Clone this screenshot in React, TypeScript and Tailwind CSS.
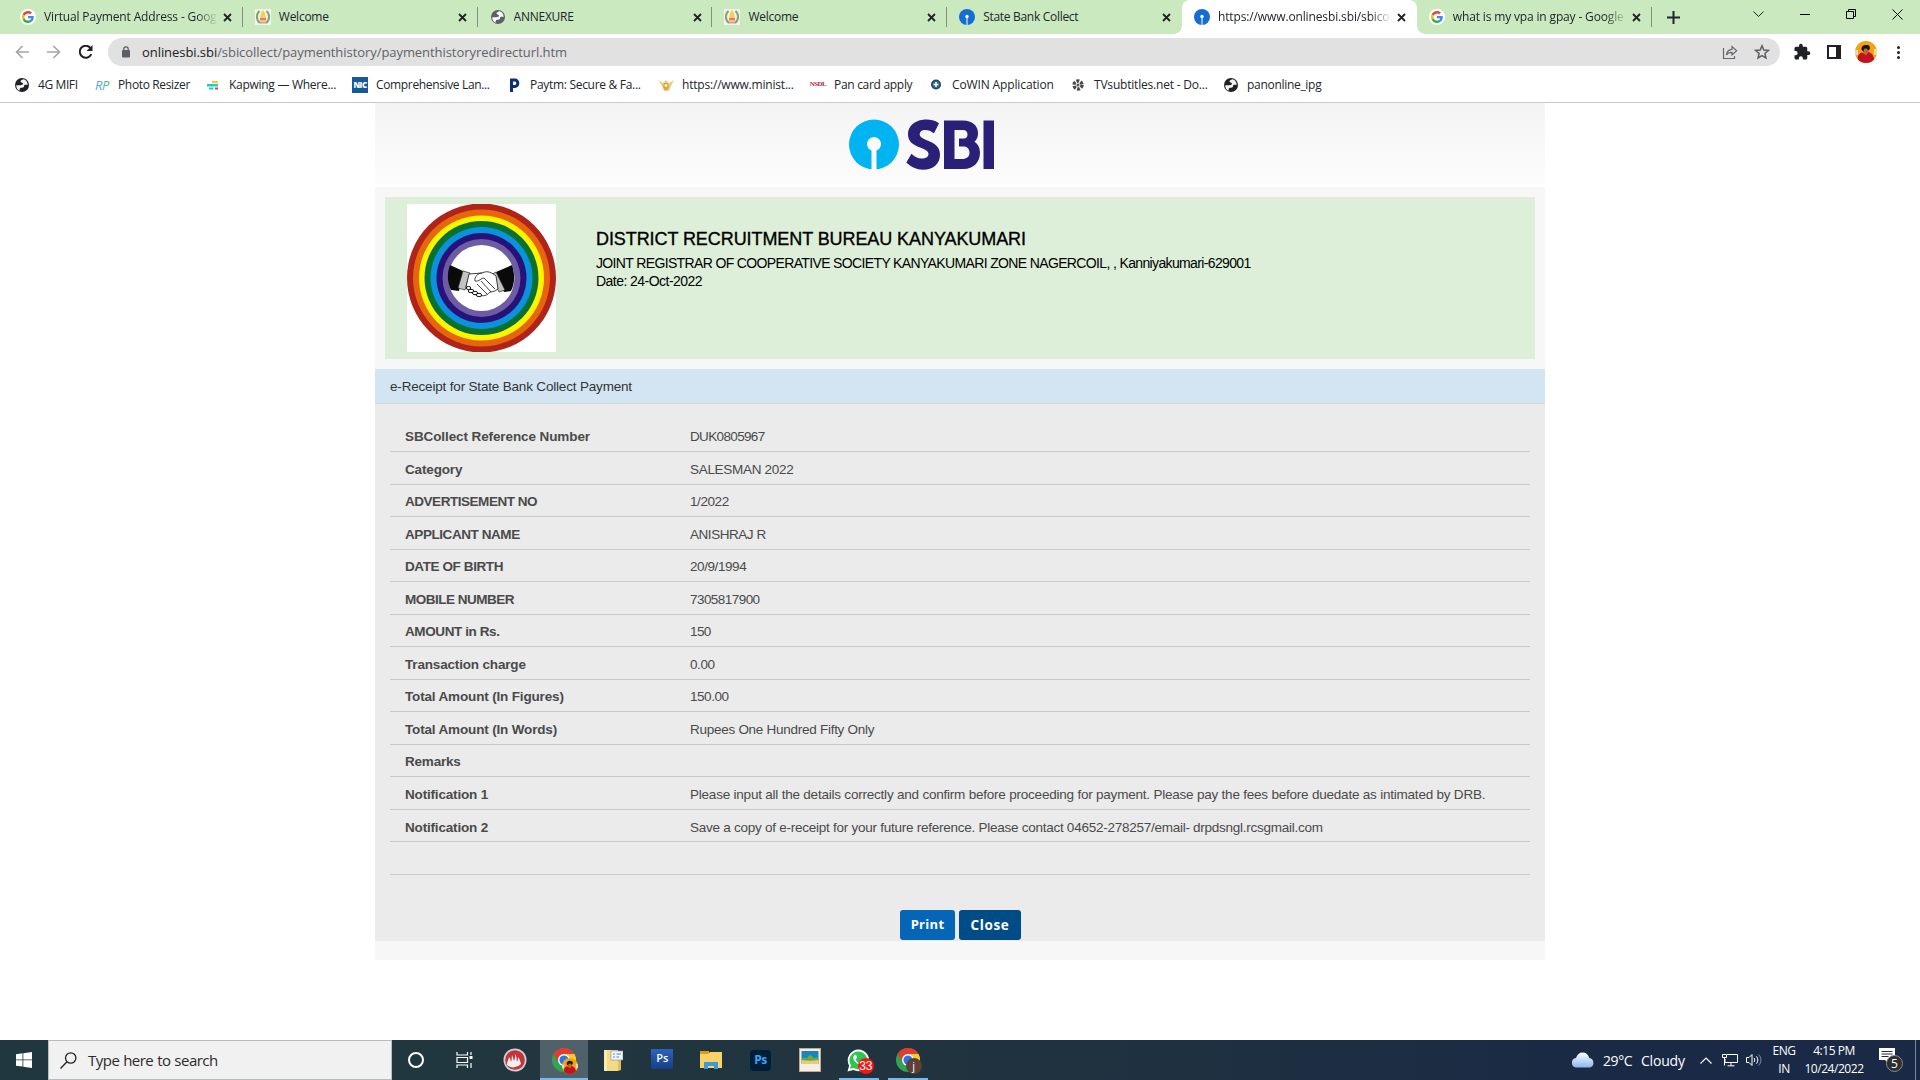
import React from "react";

const ui = "font-['Open_Sans',sans-serif]";

/* ---------- small icons ---------- */
const Google = () => (
  <svg viewBox="0 0 16 16" className="size-4">
    <circle cx="8" cy="8" r="8" fill="#fff" />
    <g transform="translate(2 2) scale(.25)">
      <path fill="#EA4335" d="M24 9.5c3.54 0 6.71 1.22 9.21 3.6l6.85-6.85C35.9 2.38 30.47 0 24 0 14.62 0 6.51 5.38 2.56 13.22l7.98 6.19C12.43 13.72 17.74 9.5 24 9.5z" />
      <path fill="#4285F4" d="M46.98 24.55c0-1.57-.15-3.09-.38-4.55H24v9.02h12.94c-.58 2.96-2.26 5.48-4.78 7.18l7.73 6c4.51-4.18 7.09-10.36 7.09-17.65z" />
      <path fill="#FBBC05" d="M10.53 28.59c-.48-1.45-.76-2.99-.76-4.59s.27-3.14.76-4.59l-7.98-6.19C.92 16.46 0 20.12 0 24c0 3.88.92 7.54 2.56 10.78l7.97-6.19z" />
      <path fill="#34A853" d="M24 48c6.48 0 11.93-2.13 15.89-5.81l-7.73-6c-2.15 1.45-4.92 2.3-8.16 2.3-6.26 0-11.57-4.22-13.47-9.91l-7.98 6.19C6.51 42.62 14.62 48 24 48z" />
    </g>
  </svg>
);
const Emblem = () => (
  <svg viewBox="0 0 16 16" className="size-4">
    <rect width="16" height="16" fill="#f4f3ea" />
    <path d="M4.500 2C1 5 1 11 5 14M11.500 2c3.500 3 3.500 9-.5 12" fill="none" stroke="#7fa274" strokeWidth="2" />
    <path d="M8 1 6 4 4.800 10h6.400L10 4z" fill="#f5cf5b" />
    <path d="M5 9h6v2.500H5z" fill="#f0785e" />
    <path d="M5 12.500h6v2H5z" fill="#c9a97c" />
  </svg>
);
const Globe = ({ color }: { color: string }) => (
  <svg viewBox="0 0 16 16" className="size-4">
    <circle cx="8" cy="8" r="7" fill={color} />
    <path d="M9.500 2.300C7.500 2.700 6.300 3.600 6.600 4.800c.3 1 2 .7 2.400 1.800.3 1.100-1.300 1.600-2.600 1.600H2.200c0 2.600 1.300 4.700 3.300 5.600.4-1.200 0-2 .9-2.700.9-.6 2.600-.2 3.300-1.100.6-.8 0-1.500.8-2.100.8-.5 2-.1 3.300-.2C13.300 4.300 11.500 2.700 9.500 2.300z" fill="#fff" fillOpacity=".95" />
  </svg>
);
const SbiDot = () => (
  <svg viewBox="0 0 16 16" className="size-4">
    <circle cx="8" cy="8" r="8" fill="#156dd4" />
    <circle cx="8" cy="7.500" r="1.700" fill="#fff" />
    <path d="M7.500 8h1v8h-1z" fill="#fff" />
  </svg>
);
const X = () => (
  <svg viewBox="0 0 9 9" className="size-[9px]">
    <path d="M1 1l7 7M8 1l-7 7" stroke="#222" strokeWidth="1.800" />
  </svg>
);
const Avatar = ({ className }: { className: string }) => (
  <svg viewBox="0 0 22 22" className={className}>
    <clipPath id="av"><circle cx="11" cy="11" r="11" /></clipPath>
    <g clipPath="url(#av)">
      <rect width="22" height="22" fill="#f2a30f" />
      <path d="M0 9h3v5H0zM19 8h3v6h-3z" fill="#e3dcc0" />
      <path d="M3 22c-1-6 0-9.500 4-10.500l3 1.500 3-2c4 .5 6 4 7 11z" fill="#c3121f" />
      <path d="M8.500 6.500h5v4.500l-2.500 3.500-2.500-3z" fill="#b8683e" />
      <path d="M6.500 8.500c-.5-3 2-5 5-4.500 3-.3 4 2 3 4.500l-1.500 1-1-2-3 .3L8.500 11z" fill="#1b1414" />
    </g>
  </svg>
);

/* ---------- tab strip ---------- */
const tabs = [
  { icon: <Google />, title: "Virtual Payment Address - Googl", track: "tracking-[-0.15px]", fade: true },
  { icon: <Emblem />, title: "Welcome", track: "tracking-[-0.25px]" },
  { icon: <Globe color="#5b6066" />, title: "ANNEXURE", track: "tracking-[-0.25px]" },
  { icon: <Emblem />, title: "Welcome", track: "tracking-[-0.25px]" },
  { icon: <SbiDot />, title: "State Bank Collect", track: "tracking-[-0.3px]", noSep: true },
  { icon: <SbiDot />, title: "https://www.onlinesbi.sbi/sbico", track: "tracking-[-0.13px]", active: true, fade: true },
  { icon: <Google />, title: "what is my vpa in gpay - Google", track: "tracking-[-0.15px]", fade: true },
];

const TabStrip = () => (
  <div className="flex h-[34px] bg-[#cae9be] pl-2">
    {tabs.map((t, i) => (
      <div
        key={i}
        className={
          "relative flex h-[34px] w-[234.8px] shrink-0 items-center pl-3 " + (t.active ? "rounded-t-lg bg-white" : "")
        }
      >
        {t.icon}
        <div
          className={
            "ml-2 w-[173px] overflow-hidden text-[12px] leading-4 whitespace-nowrap text-[#20262b] " + t.track +
            (t.fade ? " [mask-image:linear-gradient(to_right,#000_152px,transparent_174px)]" : "")
          }
        >
          {t.title}
        </div>
        <div className="ml-[6px]"><X /></div>
        {t.active && (
          <>
            <div className="absolute bottom-0 -left-2 size-2 bg-[radial-gradient(circle_at_0_0,transparent_7.5px,white_8px)]" />
            <div className="absolute -right-2 bottom-0 size-2 bg-[radial-gradient(circle_at_100%_0,transparent_7.5px,white_8px)]" />
          </>
        )}
        {!t.active && !t.noSep && <div className="absolute top-[7px] right-0 h-5 w-px bg-[#7d9176]" />}
      </div>
    ))}
    <svg viewBox="0 0 13 13" className="mt-[11px] ml-[15px] size-[13px]">
      <path d="M6.500 0v13M0 6.500h13" stroke="#20262b" strokeWidth="2" />
    </svg>
    <div className="mr-[17px] ml-auto flex items-start gap-[36px] pt-[9px]">
      <svg viewBox="0 0 11 11" className="size-[11px]"><path d="M.5 2.500l5 5 5-5" fill="none" stroke="#222" /></svg>
      <svg viewBox="0 0 10 11" className="h-[11px] w-[10px]"><path d="M0 5.500h10" stroke="#000" /></svg>
      <svg viewBox="0 0 10 10" className="size-[10px]"><path d="M.5 2.500h7v7h-7zM2.500 2.500v-2h7v7h-2" fill="none" stroke="#000" /></svg>
      <svg viewBox="0 0 11 11" className="size-[11px]"><path d="M.5.5l10 10M10.500.5l-10 10" stroke="#000" /></svg>
    </div>
  </div>
);

/* ---------- toolbar ---------- */
const Toolbar = () => (
  <div className="flex h-[36px] items-center bg-white">
    <svg viewBox="0 0 14 14" className="ml-[15px] size-[14px]"><path d="M14 7H1.500M7.500 1l-6 6 6 6" fill="none" stroke="#a3a5a8" strokeWidth="1.600" /></svg>
    <svg viewBox="0 0 14 14" className="ml-[18px] size-[14px]"><path d="M0 7h12.500M6.500 1l6 6-6 6" fill="none" stroke="#a3a5a8" strokeWidth="1.600" /></svg>
    <svg viewBox="0 0 14 14" className="ml-[18px] size-[14px]">
      <path d="M12.300 9.200A6 6 0 1 1 11.200 2.700" fill="none" stroke="#202124" strokeWidth="2" />
      <path d="M13.500 0v6h-6z" fill="#202124" />
    </svg>
    <div className="ml-[15px] flex h-7 w-[1672px] items-center rounded-full bg-[#e1e1e1] pl-[14px]">
      <svg viewBox="0 0 8 12" className="h-[12px] w-[8px]">
        <rect y="4" width="8" height="7.500" rx="1" fill="#5b5f64" />
        <path d="M1.800 5V3a2.200 2.200 0 0 1 4.400 0v2" fill="none" stroke="#5b5f64" strokeWidth="1.300" />
      </svg>
      <div className="ml-[12px] text-[13px] leading-4 tracking-[-0.06px] whitespace-nowrap text-[#5f6368]">
        <span className="text-[#202124]">onlinesbi.sbi</span>/sbicollect/paymenthistory/paymenthistoryredirecturl.htm
      </div>
      <div className="mr-[10px] ml-auto flex items-center gap-4">
        <svg viewBox="0 0 16 16" className="size-4">
          <path d="M1.500 4v10.500h11V12" fill="none" stroke="#666a6e" strokeWidth="1.200" />
          <path d="M4.500 11c.3-4 2.500-5.500 5.500-5.700V2.500l4.700 4.300L10 11V8.300C7.500 8.200 5.500 9 4.500 11z" fill="none" stroke="#666a6e" strokeWidth="1.200" />
        </svg>
        <svg viewBox="0 0 16 16" className="size-4">
          <path d="M8 1.800l1.800 4.200 4.600.4-3.500 3 1.100 4.500L8 11.500l-4 2.400 1.100-4.500-3.500-3 4.600-.4z" fill="none" stroke="#5b5f64" strokeWidth="1.500" />
        </svg>
      </div>
    </div>
    <svg viewBox="0 0 24 24" className="ml-[13px] size-[18px]">
      <path fill="#202124" d="M20.500 11H19V7c0-1.100-.9-2-2-2h-4V3.500a2.500 2.500 0 0 0-5 0V5H4a2 2 0 0 0-2 2v3.800h1.500a2.700 2.700 0 0 1 0 5.400H2V20c0 1.100.9 2 2 2h3.800v-1.500a2.700 2.700 0 0 1 5.400 0V22H17a2 2 0 0 0 2-2v-4h1.500a2.500 2.500 0 0 0 0-5z" />
    </svg>
    <div className="ml-[16px] h-[14px] w-[14px] border-2 border-r-[5px] border-[#202124] bg-white" />
    <Avatar className="ml-[14px] size-[22px]" />
    <div className="ml-[20px] flex flex-col gap-[2px]">
      <i className="size-[3px] rounded-full bg-[#202124]" />
      <i className="size-[3px] rounded-full bg-[#202124]" />
      <i className="size-[3px] rounded-full bg-[#202124]" />
    </div>
  </div>
);

/* ---------- bookmarks ---------- */
const marks = [
  { w: "w-[80px]", t: "tracking-[-0.4px]", label: "4G MIFI", icon: <Globe color="#202124" /> },
  { w: "w-[111px]", t: "tracking-[-0.35px]", label: "Photo Resizer", icon: <span className="text-[13px] leading-4 tracking-[-0.5px] text-[#55a7dc] italic">R<span className="text-[#4fc183]">P</span></span> },
  {
    w: "w-[147px]", t: "tracking-[-0.28px]", label: "Kapwing — Where...", icon: (
      <svg viewBox="0 0 16 16" className="size-4"><path d="M7 4h6v2H7z" fill="#ffc629" /><path d="M2 7h11v2.500H2z" fill="#18d1c4" /><path d="M4 10.500h4.500v2H4z" fill="#18d1c4" /><path d="M10 10.500h3v2h-3z" fill="#f0336c" /></svg>
    ),
  },
  { w: "w-[154px]", t: "tracking-[-0.35px]", label: "Comprehensive Lan...", icon: <span className="flex size-4 items-center justify-center bg-[#155a97] text-[8px] leading-none font-extrabold tracking-[-0.5px] text-white">NIC</span> },
  { w: "w-[152px]", t: "tracking-[-0.3px]", label: "Paytm: Secure & Fa...", icon: <svg viewBox="0 0 16 16" className="size-4"><path d="M5.500 15V3H9a2.600 3 0 0 1 0 6.500H7" fill="none" stroke="#0b2e74" strokeWidth="3" /></svg> },
  { w: "w-[152px]", t: "tracking-[-0.2px]", label: "https://www.minist...", icon: <svg viewBox="0 0 16 16" className="size-4"><path d="M0 3l5 3 3-3 3 3 5-3-3 6-2 5H6L4 9z" fill="#e9cf8b" /><path d="M6 6h4l1 4-2 3H7L5 10z" fill="#d6a63c" /><circle cx="8" cy="8.500" r="1.500" fill="#fff3d0" /></svg> },
  { w: "w-[118px]", t: "tracking-[-0.3px]", label: "Pan card apply", icon: <span className="font-['Liberation_Serif',serif] text-[7px] leading-none font-bold tracking-[-0.6px] text-[#b52a33]">NSDL</span> },
  { w: "w-[142px]", t: "tracking-[-0.13px]", label: "CoWIN Application", icon: <svg viewBox="0 0 16 16" className="size-4"><circle cx="8" cy="7.500" r="5" fill="#1d4266" /><circle cx="8" cy="7.500" r="3.700" fill="#2f6a8c" /><path d="M8 5v5M5.500 7.500h5" stroke="#fff" strokeWidth="1.500" /></svg> },
  { w: "w-[153px]", t: "tracking-[-0.2px]", label: "TVsubtitles.net - Do...", icon: <svg viewBox="0 0 16 16" className="size-4"><circle cx="8" cy="8" r="4" fill="none" stroke="#4a4a4a" strokeWidth="3.400" strokeDasharray="2.900 1.290" /><circle cx="8" cy="8" r="1.500" fill="#555" /></svg> },
  { w: "w-[120px]", t: "tracking-[-0.3px]", label: "panonline_ipg", icon: <Globe color="#202124" /> },
];

const Bookmarks = () => (
  <div className="flex h-[33px] items-center border-b border-[#c9c9c9] bg-white pb-[3px] pl-[14px]">
    {marks.map((m) => (
      <div key={m.label} className={"flex shrink-0 items-center " + m.w}>
        <div className="flex size-4 items-center justify-center">{m.icon}</div>
        <div className={"ml-2 text-[12px] leading-4 whitespace-nowrap text-[#20262b] " + m.t}>{m.label}</div>
      </div>
    ))}
  </div>
);

/* ---------- page ---------- */
const SbiLogo = () => (
  <svg viewBox="0 0 146 51" className="h-[51px] w-[146px]">
    <circle cx="25" cy="25.500" r="25" fill="#00b4f1" />
    <path d="M22.500 51V31.500A7 7 0 1 1 27.500 31.500V51z" fill="#fbfbfb" />
    <path d="M90 4.200C84 .2 78 .3 74 .8c-9 1-15 7-15 14.200 0 8 5 10.500 12 13.500 5.500 2.300 8.500 3.500 8.500 6.500 0 3-3 4.500-6.500 4.500-4.500 0-7.500-2-10.500-4.800L57.300 43.500C62 48 67.500 50.700 74 50.700c10 0 17-6 17-15 0-8.500-6-11.500-12-14-5-2.200-8.300-3.500-8.300-6.500 0-2.700 2.500-4.200 5.300-4.200 3.500 0 6 1.200 9 3.300z" fill="#2a2078" />
    <path fillRule="evenodd" d="M95 1.500h19c9 0 15 5 15 12.500 0 4-1 6.500-3.500 8.700 3.500 2.500 5.500 6 5.500 11.300 0 9-6.500 16-16.500 16H95zM105.500 11v29H113c5 0 7.500-2.500 7.500-6.300 0-3.700-2.500-6.200-5.500-6.200h-5v-8h5c2 0 3.500-1.500 3.500-4s-1.500-4.500-4.500-4.500z" fill="#2a2078" />
    <path d="M134.500 1.500h10.500V50h-10.500z" fill="#2a2078" />
  </svg>
);

const rings = [
  { r: 74.5, c: "#b02318" }, { r: 68.5, c: "#e8650f" }, { r: 62.5, c: "#fdf500" }, { r: 57, c: "#08712f" },
  { r: 51, c: "#0b92dd" }, { r: 45, c: "#27127a" }, { r: 39, c: "#6d5ba5" }, { r: 33, c: "#fff" },
];
const Handshake = () => (
  <svg viewBox="0 0 149 148" className="h-[148px] w-[149px] bg-white">
    {rings.map((k) => <circle key={k.c} cx="74.500" cy="74" r={k.r} fill={k.c} />)}
    <path d="M43 61l13 6-4 20-8-1c-4-8-4-17-1-25zM105 61l-16 7 8 20 7-1c4-8 4-17 1-26z" fill="#0a0a0a" />
    <path d="M56 67l7 2-5 17-7-2zM89 68l-5 3 8 17 6-2z" fill="#c3c3c3" stroke="#222" strokeWidth=".7" />
    <path d="M62 70l13-1c6-3 10 0 14 3l2 13c-3 2-5 3-8 3-4 5-9 4-14 3-5-2-8-6-10-8z" fill="#fff" stroke="#111" strokeWidth=".8" />
    <path d="M75 69c-4 0-8 4-7 8 4 1 6-3 9-3l11 11M74 77l10 11M70 80l10 10" fill="none" stroke="#111" strokeWidth=".8" />
    <g fill="#fff" stroke="#111" strokeWidth="1">
      <ellipse cx="61.500" cy="84" rx="2.200" ry="1.600" /><ellipse cx="64" cy="87" rx="2.800" ry="1.700" />
      <ellipse cx="68" cy="89" rx="2.600" ry="1.700" /><ellipse cx="72" cy="91" rx="2.600" ry="1.700" />
    </g>
  </svg>
);

const rows = [
  ["SBCollect Reference Number", "DUK0805967", "tracking-[-0.1px]", "tracking-[-0.65px]"],
  ["Category", "SALESMAN 2022", "tracking-[-0.15px]", "tracking-[-0.3px]"],
  ["ADVERTISEMENT NO", "1/2022", "tracking-[-0.46px]", "tracking-[-0.42px]"],
  ["APPLICANT NAME", "ANISHRAJ R", "tracking-[-0.43px]", "tracking-[-0.45px]"],
  ["DATE OF BIRTH", "20/9/1994", "tracking-[-0.4px]", "tracking-[-0.42px]"],
  ["MOBILE NUMBER", "7305817900", "tracking-[-0.5px]", "tracking-[-0.55px]"],
  ["AMOUNT in Rs.", "150", "tracking-[-0.4px]", "tracking-[-0.6px]"],
  ["Transaction charge", "0.00", "tracking-[-0.17px]", "tracking-[-0.4px]"],
  ["Total Amount (In Figures)", "150.00", "tracking-[-0.16px]", "tracking-[-0.45px]"],
  ["Total Amount (In Words)", "Rupees One Hundred Fifty Only", "tracking-[-0.16px]", "tracking-[-0.27px]"],
  ["Remarks", "", "tracking-[-0.2px]", ""],
  ["Notification 1", "Please input all the details correctly and confirm before proceeding for payment. Please pay the fees before duedate as intimated by DRB.", "tracking-[-0.18px]", "tracking-[-0.215px]"],
  ["Notification 2", "Save a copy of e-receipt for your future reference. Please contact 04652-278257/email- drpdsngl.rcsgmail.com", "tracking-[-0.18px]", "tracking-[-0.255px]"],
  ["", "", "", ""],
];

const Receipt = () => (
  <div className="mx-auto w-[1170px] bg-[#f7f7f7] font-['Liberation_Sans',Arial,sans-serif]">
    <div className="h-[84px] border-b-[3px] border-white bg-linear-to-b from-[#f4f4f4] to-[#fcfcfc] pt-[16px] pl-[474px]">
      <SbiLogo />
    </div>
    <div className="mx-[10px] mt-[10px] flex h-[162px] bg-[#ddefd8] pt-[7px] pl-[22px] text-black">
      <Handshake />
      <div className="ml-[40px] pt-[24px] whitespace-nowrap">
        <div className="text-[18px] leading-[22px] tracking-[-0.08px] [-webkit-text-stroke:0.35px_black]">DISTRICT RECRUITMENT BUREAU KANYAKUMARI</div>
        <div className="mt-[4px] text-[14px] leading-[18px] tracking-[-0.64px]">JOINT REGISTRAR OF COOPERATIVE SOCIETY KANYAKUMARI ZONE NAGERCOIL, , Kanniyakumari-629001</div>
        <div className="text-[14px] leading-[18px] tracking-[-0.54px]">Date: 24-Oct-2022</div>
      </div>
    </div>
    <div className="mt-[10px] h-[35px] border-b border-[#d3dbe1] bg-[#d3e5f3] pl-[15px] text-[13.5px] leading-[35px] text-[#333]">
      <span className="tracking-[-0.18px]">e-Receipt for State Bank Collect Payment</span>
    </div>
    <div className="h-[537px] bg-[#ebebeb] px-[15px] pt-[15.5px]">
      {rows.map((r, i) => (
        <div key={i} className="flex h-[32.54px] items-center border-b border-[#cacaca] pl-[15px] text-[13.5px] text-[#4a4a4a]">
          <div className={"w-[285px] shrink-0 pt-[4px] font-bold whitespace-nowrap " + r[2]}>{r[0]}</div>
          <div className={"pt-[4px] whitespace-nowrap " + r[3]}>{r[1]}</div>
        </div>
      ))}
      <div className="mt-[35px] ml-[510px] flex gap-1 font-['Open_Sans',sans-serif] text-[13px] font-bold text-white">
        <button className="h-[30px] w-[55px] rounded-[3px] bg-[#0566b8] tracking-[0.3px]">Print</button>
        <button className="h-[30px] w-[62px] rounded-[3px] bg-[#004c86] text-[13.500px] tracking-[0.6px]">Close</button>
      </div>
    </div>
    <div className="h-[19px]" />
  </div>
);

/* ---------- taskbar ---------- */
const Chrome = () => (
  <svg viewBox="0 0 24 24" className="size-6">
    <circle cx="12" cy="12" r="12" fill="#32a350" />
    <path d="M1.600 6A12 12 0 0 1 22.400 6H12a6 6 0 0 0-5.200 9z" fill="#e33b2e" />
    <path d="M22.400 6A12 12 0 0 1 12 24l5.200-9A6 6 0 0 0 12 6z" fill="#fcc934" />
    <circle cx="12" cy="12" r="6" fill="#fff" />
    <circle cx="12" cy="12" r="4.600" fill="#2a76e8" />
  </svg>
);

const apps = [
  {
    icon: (
      <svg viewBox="0 0 24 24" className="size-6">
        <circle cx="12" cy="12" r="11.500" fill="#d0d0d0" /><circle cx="12" cy="12" r="9.800" fill="#c5343b" />
        <path d="M4 17c0-4 1.500-5 2-8 1.500 1.500 1.500 3 2 5 1-2 .5-4 1-7 1 2 1.500 4 2 6 1-2 1-4 1.500-7 1 2.500 1 5 1.500 7.500.7-1 1-2.500 1-4.500 2 2.500 2.500 5 3 7a10 10 0 0 1-14 1z" fill="#f3f0ef" />
      </svg>
    ),
  },
  { icon: <><Chrome /><div className="absolute top-[18px] left-[22px]"><Avatar className="size-4" /></div></>, bg: true, bar: "w-12" },
  {
    icon: (
      <svg viewBox="0 0 20 24" className="h-6 w-5">
        <path d="M1 2h14v21H1z" fill="#f5da86" /><path d="M1 2h3v21H1z" fill="#fbe9ae" /><path d="M15 10h3v12l-3 1z" fill="#e0bd5d" />
        <path d="M8 3h12v9H8z" fill="#f5f8fb" stroke="#8a9ba8" strokeWidth=".7" /><path d="M10 6h2m1.500 0H18M10 9h2m1.500 0H16" stroke="#3c87c8" strokeWidth="1.200" />
      </svg>
    ),
  },
  { icon: <div className="mb-[3px] flex h-[20px] w-[22px] items-center justify-center bg-linear-to-b from-[#2c64bb] to-[#173f86] text-[11px] font-semibold text-white">Ps</div> },
  {
    icon: (
      <svg viewBox="0 0 22 18" className="h-[18px] w-[22px]">
        <path d="M0 0h9v3H0z" fill="#dd9a13" /><path d="M0 3h8l2-2h12v16H0z" fill="#fbd266" />
        <path d="M4 18v-7h14v7h-4v-3H8v3z" fill="#3e99da" />
      </svg>
    ),
  },
  { icon: <div className="flex h-[21px] w-[21px] items-center justify-center rounded-[4px] bg-[#001e36] text-[12px] font-bold tracking-[-0.5px] text-[#31a8ff]">Ps</div> },
  {
    icon: (
      <svg viewBox="0 0 22 24" className="h-6 w-[22px]">
        <path d="M0 0h22v24H0z" fill="#c6a887" /><path d="M1 1h20v22H1z" fill="#f3efe7" />
        <path d="M2.500 3h17v13h-17z" fill="#1c84bd" /><path d="M2.500 12C4 9 6 9 8 11c1-4 3-5 5-3 1 1 1.500 2 3 2 1.500-1 2.500-.5 3.500 1v2h-17z" fill="#68ab42" /><path d="M2.500 12c6 1 11 1 17 0v4h-17z" fill="#e9cc79" />
      </svg>
    ),
  },
  {
    icon: (
      <>
        <svg viewBox="0 0 24 24" className="size-[23px]">
          <path d="M12 .5A11.300 11.300 0 0 0 2.200 17.400L.5 23.500l6.200-1.600A11.300 11.300 0 1 0 12 .5z" fill="#fff" />
          <path d="M12 2.500A9.300 9.300 0 0 0 4.200 17l-1 3.700L7 19.800A9.300 9.300 0 1 0 12 2.500z" fill="#2cc64f" />
          <path d="M8 6c-3 2-1 6 2 8.500s7 4 8 1l-3-2-1.500 1.500c-2-.7-3.500-2-4.500-4L10.500 9 9.500 6z" fill="#fff" />
        </svg>
        <div className="absolute top-[18px] left-[23px] flex size-4 items-center justify-center rounded-full bg-[#f21616] font-['Liberation_Sans',sans-serif] text-[12px] tracking-[-0.300px] text-white">33</div>
      </>
    ),
    bar: "w-10",
  },
  { icon: <><Chrome /><div className="absolute top-[18px] left-[22px] flex size-4 items-center justify-center rounded-full bg-[#5d4037] pb-px text-[11px] leading-none text-white">j</div></>, bar: "w-10" },
];

const Taskbar = () => (
  <div className="flex h-10 items-center bg-linear-to-r from-[#21373f] from-20% via-[#20323f] via-55% to-[#1a2945] to-85% text-white">
    <div className="flex w-12 justify-center">
      <svg viewBox="0 0 16 16" className="size-4"><path d="M0 2.200L6.500 1.300v6.200H0zM7.300 1.200L16 0v7.500H7.300zM0 8.300h6.500v6.300L0 13.700zM7.300 8.300H16V16l-8.700-1.200z" fill="#fff" /></svg>
    </div>
    <div className="flex h-10 w-[344px] items-center border border-[#b9bcbd] bg-[#f1f1f1] pl-[11px]">
      <svg viewBox="0 0 17 17" className="size-[17px]"><circle cx="10.700" cy="6" r="5.200" fill="none" stroke="#222" strokeWidth="1.300" /><path d="M7 9.700L.5 16.500" stroke="#222" strokeWidth="1.300" /></svg>
      <span className="ml-[11px] text-[15px] tracking-[-0.52px] [word-spacing:0.5px] text-[#2b2b2b]">Type here to search</span>
    </div>
    <div className="flex w-12 justify-center"><div className="size-4 rounded-full border-[2.500px] border-white" /></div>
    <div className="flex w-12 justify-center">
      <svg viewBox="0 0 17 16" className="h-4 w-[17px]"><path d="M1 0v3h10.500V0M1 16v-3h10.500v3M1 5.500h10.500v5H1z" fill="none" stroke="#fff" strokeWidth="1.200" /><path d="M15 0v16" stroke="#fff" strokeWidth="1.200" strokeDasharray="3 8 5" /><path d="M13.500 4h3v3h-3z" fill="#fff" /></svg>
    </div>
    <div className="ml-[3px] flex">
      {apps.map((a, i) => (
        <div key={i} className="w-[49.100px]">
          <div className={"relative flex h-10 w-12 items-center justify-center " + (a.bg ? "bg-[#4f6169]" : "")}>
            {a.icon}
            {a.bar && <div className={"absolute bottom-0 left-1/2 h-[2px] -translate-x-1/2 bg-[#76b9ed] " + a.bar} />}
          </div>
        </div>
      ))}
    </div>
    <div className="ml-auto flex h-10 items-center">
      <svg viewBox="0 0 24 16" className="h-4 w-6">
        <defs><linearGradient id="cl" x2="0" y2="1"><stop stopColor="#fff" /><stop offset="1" stopColor="#8db5ee" /></linearGradient></defs>
        <path d="M5 15.500a4.800 4.800 0 0 1 0-9.500C6 2.500 8.500.5 11.500.5c3.500 0 6 2 6.800 5.500a4.900 4.900 0 0 1 .7 9.500z" fill="url(#cl)" />
      </svg>
      <span className="ml-2 w-[38px] text-[14px] tracking-[-0.400px]">29°C</span>
      <span className="w-[59px] text-[14px] tracking-[-0.200px]">Cloudy</span>
      <svg viewBox="0 0 12 7" className="h-[7px] w-3"><path d="M.5 6.500L6 1l5.500 5.500" fill="none" stroke="#fff" strokeWidth="1.200" /></svg>
      <svg viewBox="0 0 16 14" className="ml-[10px] h-[14px] w-4"><path d="M5 1.500h10.500v8H3V6M9 9.500v3M5.500 12.800h7" fill="none" stroke="#fff" /><path d="M.5 1.500h4v3h-4zM2.500 4.500v8" fill="none" stroke="#fff" /></svg>
      <svg viewBox="0 0 17 14" className="ml-[8px] h-[14px] w-[17px]"><path d="M.5 4.500H3l3-3v11l-3-3H.5z" fill="none" stroke="#fff" /><path d="M8 5c1 1.200 1 2.800 0 4M10.300 3.300c2 2 2 5.400 0 7.400" fill="none" stroke="#fff" /><path d="M12.600 1.500c3 3 3 8 0 11" fill="none" stroke="#8390a5" /></svg>
      <div className="ml-[6px] flex w-[30px] flex-col items-center text-[12px] leading-[18px] tracking-[-0.400px]"><span>ENG</span><span>IN</span></div>
      <div className="ml-[2px] flex w-[66px] flex-col items-center text-[12px] leading-[18px] tracking-[-0.450px] whitespace-nowrap"><span>4:15 PM</span><span>10/24/2022</span></div>
      <div className="relative ml-[12px] h-6 w-[28px]">
        <svg viewBox="0 0 16 16" className="size-4"><path d="M0 0h16v12h-6v4l-4-4H0z" fill="#fff" /><path d="M2.500 3.500h11M2.500 6h11M2.500 8.500h7" stroke="#1a2945" /></svg>
        <div className="absolute top-[7px] left-[7px] flex size-[17px] items-center justify-center rounded-full border border-[#8a8a8a] bg-[#2e2e2e] text-[12px] leading-none">5</div>
      </div>
      <div className="ml-[8px] h-10 w-px bg-[#7c8798]" />
      <div className="w-1" />
    </div>
  </div>
);

export default function App() {
  return (
    <div className={"flex h-[1080px] w-[1920px] flex-col overflow-hidden bg-white " + ui}>
      <TabStrip />
      <Toolbar />
      <Bookmarks />
      <div className="flex-1">
        <Receipt />
      </div>
      <Taskbar />
    </div>
  );
}
